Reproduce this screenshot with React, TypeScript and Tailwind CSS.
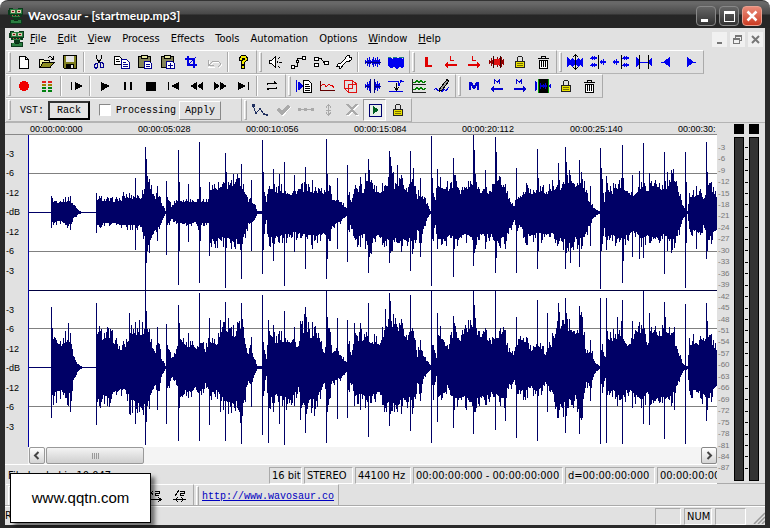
import type { ReactNode } from 'react';

type Point = [number, number, number];

// [x, peak above centre, peak below centre]
const leftBody: Point[] = [
  [0, 0, 0], [21, 0, 0], [22, 12, 11], [30, 11, 9], [40, 13, 13], [44, 8, 6], [48, 3, 2], [52, 0, 0], [66, 0, 0], [67, 14, 14],
  [80, 12, 11], [92, 13, 12], [94, 16, 14], [112, 16, 14], [116, 26, 30], [117, 50, 46], [119, 33, 38], [122, 24, 28], [126, 15, 18],
  [128, 18, 18], [131, 12, 12], [134, 5, 5], [136, 1, 1], [137, 20, 16], [139, 14, 12], [142, 6, 6], [147, 12, 11], [168, 12, 11],
  [170, 18, 18], [172, 12, 12], [179, 11, 12], [180, 26, 32], [195, 25, 28], [205, 32, 32], [211, 30, 30], [215, 24, 24], [219, 12, 12],
  [222, 12, 12], [225, 8, 8], [228, 1, 1], [232, 1, 1], [233, 36, 30], [237, 11, 8], [239, 24, 28], [246, 23, 27], [255, 22, 25],
  [262, 20, 22], [273, 24, 25], [285, 23, 26], [298, 21, 22], [300, 26, 28], [303, 14, 14], [310, 12, 10], [315, 6, 5], [317, 3, 3],
  [319, 18, 18], [322, 12, 13], [325, 25, 30], [335, 21, 24], [338, 30, 30], [342, 38, 36], [345, 22, 24], [351, 22, 27], [358, 28, 30],
  [363, 42, 38], [365, 22, 26], [372, 30, 33], [378, 23, 26], [384, 36, 36], [388, 16, 18], [391, 20, 28], [395, 13, 15], [398, 8, 5],
  [401, 1, 1], [403, 28, 28], [406, 12, 12], [408, 30, 30], [413, 28, 32], [420, 24, 25], [426, 32, 30], [431, 22, 24], [440, 27, 26],
  [446, 32, 32], [450, 23, 24], [461, 21, 24], [469, 38, 32], [473, 24, 25], [477, 22, 24], [480, 13, 18], [485, 5, 8], [487, 16, 16],
  [491, 15, 14], [497, 24, 26], [502, 20, 24], [509, 24, 24], [518, 20, 24], [523, 26, 24], [532, 26, 28], [540, 36, 36], [546, 26, 28],
  [551, 34, 30], [555, 26, 28], [559, 13, 16], [563, 6, 6], [568, 2, 2], [570, 1, 1], [572, 36, 30], [575, 12, 14], [577, 26, 28],
  [583, 22, 26], [590, 30, 30], [597, 24, 26], [606, 16, 20], [612, 30, 30], [618, 24, 26], [625, 32, 30], [635, 23, 24], [642, 36, 32],
  [646, 34, 28], [650, 18, 18], [653, 8, 8], [656, 3, 3], [658, 1, 1], [660, 16, 16], [664, 18, 20], [670, 20, 22], [674, 13, 14],
  [679, 32, 30], [683, 24, 24], [689, 15, 16],
];

const leftPeaks: Point[] = [
  [22, 16, 15], [41, 16, 17], [67, 19, 20], [106, 34, 37], [116, 65, 77], [117, 53, 48], [128, 26, 28], [137, 31, 42], [149, 62, 72],
  [150, 30, 38], [159, 28, 29], [170, 70, 70], [171, 25, 28], [180, 30, 43], [196, 59, 75], [197, 40, 35], [212, 48, 66], [222, 32, 38],
  [233, 72, 61], [234, 40, 37], [244, 43, 48], [250, 38, 30], [255, 50, 73], [265, 37, 39], [276, 45, 56], [283, 32, 36], [297, 73, 66],
  [298, 38, 46], [308, 34, 36], [318, 47, 49], [331, 35, 34], [336, 39, 36], [339, 53, 60], [340, 42, 44], [360, 61, 50], [361, 55, 40],
  [362, 46, 36], [368, 47, 30], [372, 37, 39], [381, 61, 58], [384, 44, 36], [391, 34, 44], [402, 76, 73], [408, 43, 36], [424, 54, 64],
  [425, 34, 36], [444, 77, 53], [445, 62, 40], [456, 42, 36], [466, 75, 60], [467, 60, 45], [476, 28, 36], [487, 44, 60], [497, 29, 32],
  [508, 63, 56], [509, 34, 38], [529, 49, 31], [536, 65, 56], [537, 50, 40], [541, 37, 50], [550, 52, 54], [561, 26, 33], [571, 64, 76],
  [572, 40, 38], [577, 36, 37], [593, 67, 70], [594, 34, 48], [603, 37, 44], [610, 41, 46], [614, 69, 45], [620, 39, 30], [635, 60, 61],
  [638, 40, 38], [642, 42, 34], [656, 60, 75], [657, 30, 30], [667, 26, 36], [677, 70, 46], [678, 40, 38],
];

const rightBody: Point[] = [
  [0, 0, 0], [21, 0, 0], [22, 36, 34], [26, 30, 28], [32, 25, 26], [39, 32, 30], [42, 26, 28], [44, 12, 14], [47, 5, 6], [51, 1, 1],
  [54, 0, 0], [66, 0, 0], [67, 40, 40], [72, 32, 32], [79, 34, 34], [85, 27, 28], [91, 18, 22], [98, 26, 27], [101, 40, 38], [108, 36, 38],
  [115, 40, 40], [118, 44, 42], [122, 25, 28], [126, 16, 18], [129, 26, 26], [132, 9, 9], [136, 1, 1], [138, 26, 24], [142, 10, 10],
  [145, 12, 12], [148, 22, 20], [151, 32, 32], [158, 22, 22], [163, 26, 26], [168, 20, 20], [172, 28, 28], [176, 18, 18], [181, 30, 30],
  [187, 24, 24], [192, 36, 34], [199, 42, 40], [206, 32, 38], [211, 44, 44], [215, 34, 36], [218, 14, 14], [222, 20, 20], [225, 8, 8],
  [228, 1, 1], [232, 1, 1], [234, 26, 26], [237, 9, 9], [239, 34, 34], [246, 28, 30], [256, 30, 34], [264, 28, 32], [269, 20, 22],
  [272, 36, 40], [276, 44, 44], [281, 34, 36], [286, 38, 38], [292, 24, 24], [295, 14, 16], [299, 44, 36], [303, 16, 14], [307, 20, 14],
  [313, 9, 9], [317, 4, 4], [319, 24, 24], [322, 14, 14], [325, 32, 30], [337, 30, 32], [343, 28, 30], [350, 25, 27], [357, 42, 40],
  [363, 44, 42], [368, 36, 38], [374, 38, 36], [378, 30, 32], [384, 42, 40], [388, 12, 16], [391, 24, 24], [395, 9, 9], [401, 2, 2],
  [404, 26, 26], [407, 8, 8], [409, 36, 34], [414, 32, 30], [418, 18, 20], [424, 38, 36], [430, 30, 30], [436, 38, 34], [444, 44, 42],
  [449, 36, 34], [456, 34, 32], [462, 26, 28], [468, 34, 30], [475, 34, 32], [479, 18, 20], [485, 14, 14], [489, 30, 26], [496, 28, 26],
  [502, 18, 20], [508, 26, 28], [516, 14, 16], [522, 24, 26], [528, 44, 40], [536, 46, 40], [541, 40, 36], [546, 34, 32], [553, 46, 44],
  [557, 12, 16], [561, 20, 20], [565, 6, 6], [570, 1, 1], [573, 20, 20], [576, 9, 9], [578, 32, 28], [586, 30, 26], [592, 38, 36],
  [598, 24, 24], [605, 32, 30], [613, 44, 36], [618, 26, 28], [624, 42, 40], [630, 34, 32], [634, 40, 34], [640, 40, 34], [645, 26, 26],
  [650, 12, 12], [654, 3, 3], [658, 1, 1], [660, 24, 24], [666, 28, 26], [672, 24, 28], [678, 38, 36], [683, 26, 26], [689, 17, 17],
];

const rightPeaks: Point[] = [
  [22, 60, 50], [39, 44, 38], [41, 34, 44], [67, 64, 57], [78, 40, 38], [100, 54, 46], [106, 45, 56], [110, 47, 44], [116, 77, 77],
  [117, 56, 54], [128, 40, 42], [137, 43, 56], [149, 62, 73], [150, 44, 40], [159, 34, 30], [170, 74, 73], [180, 49, 57], [191, 47, 44],
  [196, 65, 73], [199, 49, 46], [212, 64, 76], [213, 48, 48], [222, 30, 39], [233, 72, 67], [239, 47, 75], [244, 42, 44], [250, 36, 56],
  [255, 56, 77], [265, 40, 38], [271, 46, 52], [276, 60, 65], [277, 50, 46], [285, 40, 48], [297, 77, 75], [298, 50, 44], [308, 49, 51],
  [318, 47, 50], [325, 44, 38], [331, 44, 42], [339, 64, 69], [356, 58, 40], [360, 74, 58], [361, 66, 46], [368, 40, 44], [372, 48, 46],
  [381, 72, 63], [391, 27, 33], [402, 77, 75], [408, 54, 54], [424, 51, 60], [436, 42, 40], [444, 77, 66], [445, 62, 44], [456, 38, 36],
  [466, 77, 62], [476, 37, 53], [487, 50, 70], [508, 67, 73], [518, 54, 44], [529, 64, 50], [536, 69, 65], [537, 54, 48], [550, 61, 66],
  [551, 52, 50], [561, 27, 33], [571, 69, 76], [577, 69, 75], [588, 50, 38], [593, 67, 76], [603, 46, 40], [614, 77, 56], [620, 54, 57],
  [635, 65, 71], [645, 40, 42], [656, 63, 76], [677, 64, 53], [678, 46, 42],
];

const jitter = (n: number) => {
  const s = Math.sin(n * 127.1 + 311.7) * 43758.5453;
  return s - Math.floor(s);
};

function wavePath(body: Point[], peaks: Point[], centre: number) {
  const peakAt = new Map(peaks.map((p) => [p[0], p]));
  let d = '';
  let i = 0;
  for (let x = 0; x < 689; x++) {
    while (i < body.length - 2 && body[i + 1][0] <= x) i++;
    const [x0, u0, d0] = body[i];
    const [x1, u1, d1] = body[i + 1];
    const t = (x - x0) / (x1 - x0);
    let up = (u0 + (u1 - u0) * t) * (0.84 + jitter(x) ** 2 * 0.42);
    let down = (d0 + (d1 - d0) * t) * (0.84 + jitter(x + 900) ** 2 * 0.42);
    const peak = peakAt.get(x);
    if (peak) {
      up = Math.max(up, peak[1]);
      down = Math.max(down, peak[2]);
    }
    d += `M${x + 0.5} ${centre - Math.round(up)}V${centre + 1 + Math.round(down)}`;
  }
  return d;
}

const leftPath = wavePath(leftBody, leftPeaks, 77);
const rightPath = wavePath(rightBody, rightPeaks, 232);

const menus = ['File', 'Edit', 'View', 'Process', 'Effects', 'Tools', 'Automation', 'Options', 'Window', 'Help'];
const underlined = ['File', 'Edit', 'View', 'Window', 'Help'];
const times = ['00:00:00:000', '00:00:05:028', '00:00:10:056', '00:00:15:084', '00:00:20:112', '00:00:25:140', '00:00:30:'];
const dbScale = ['-3', '-6', '-12', '-dB', '-12', '-6', '-3'];
const meterScale = Array.from({ length: 29 }, (_, i) => -3 * (i + 1));

const WAVE = 'M.5 6v4M1.5 7v2M2.5 4v8M3.5 6v4M4.5 3v10M5.5 6v4M6.5 7v2M7.5 5v6M8.5 3v10M9.5 6v4M10.5 4v8M11.5 6v4M12.5 3v10M13.5 6v4M14.5 5v6';

const lock = (
  <>
    <path d="M5.5 7V3.5l1-1h3l1 1V7" fill="none" stroke="#222" />
    <path d="M3.5 7.5h9v6h-9z" fill="#e8e000" stroke="#222" />
    <path d="M5 9.5h6M5 11.500h6" stroke="#777000" />
  </>
);
const trash = (
  <>
    <path d="M3 4.5h11M6.5 4V2.5h4V4" fill="none" stroke="#000" />
    <path d="M4.5 6.5h8v7.5h-8z" fill="#fff" stroke="#000" />
    <path d="M6.5 7v6M8.5 7v6M10.5 7v6" stroke="#000" />
  </>
);
const arrowLeft = <path d="M1 11l4-3v2h9v2H5v2z" />;
const arrowRight = <path d="M15 11l-4-3v2H2v2h9v2z" />;

const icons: Record<string, ReactNode> = {
  New: <path d="M3.5 2.5h6l3 3v9h-9zM9.5 2.5v3h3" fill="#fff" stroke="#000" />,
  Open: (
    <>
      <path d="M.5 13.5v-8h4l1 1h5v3M9 3.5l2-1 3 2M14.5 2v3h-3" fill="none" stroke="#000" />
      <path d="M1 13V6h3l1 1h5v2H4z" fill="#f0f0a0" />
      <path d="M1 13.5l3-5h11l-4 5z" fill="#8c8c20" stroke="#000" />
    </>
  ),
  Save: (
    <>
      <path d="M1.5 1.5h13v13h-12l-1-1z" fill="#808020" stroke="#000" />
      <path d="M4 2h8v6H4z" fill="#e4e4e4" />
      <path d="M4 10h8v4H4z" fill="#000" />
      <path d="M9 11h2v3H9z" fill="#e4e4e4" />
    </>
  ),
  Cut: (
    <>
      <path d="M5.5 1v3l3 5M10.5 1v3l-3 5" fill="none" stroke="#000" />
      <path d="M7 9.5H5L3.5 11v2L5 14.5 6.5 13zM9 8.5h2l1.5 1.5v3h-3z" fill="none" stroke="#000090" />
    </>
  ),
  Copy: (
    <>
      <path d="M.5 2.5h5l2 2v6h-7z" fill="#fff" stroke="#000" />
      <path d="M2 5.5h3M2 7.5h4" stroke="#000" />
      <path d="M7.5 5.5h5l3 3v6h-8z" fill="#fff" stroke="#000090" />
      <path d="M9 8.5h3M9 10.5h5M9 12.5h5" stroke="#000090" />
    </>
  ),
  Paste: (
    <>
      <path d="M1.5 2.5h12v11h-12z" fill="#85855a" stroke="#000" />
      <path d="M4.5 1.5h6v3h-6z" fill="#e6e6a0" stroke="#000" />
      <path d="M7.5 7.5h5l2 2v5h-7z" fill="#fff" stroke="#000090" />
      <path d="M9 10.5h4M9 12.5h4" stroke="#000090" />
    </>
  ),
  'Paste mix': (
    <>
      <path d="M1.5 2.5h12v11h-12z" fill="#85855a" stroke="#000" />
      <path d="M4.5 1.5h6v3h-6z" fill="#e6e6a0" stroke="#000" />
      <path d="M6.5 7.5h6l2 2v5h-8z" fill="#fff" stroke="#000090" />
      <path d="M8 11.5h5M10.5 9v5" stroke="#000090" />
    </>
  ),
  Crop: (
    <>
      <path d="M5 2v9h9M2 5h9v9" fill="none" stroke="#0000e0" strokeWidth="2" />
      <path d="M5 11l8-8" stroke="#0000e0" />
    </>
  ),
  Undo: (
    <>
      <path d="M3 6l-1 6h6M3 11l4-4h5l2 2v2l-2 2" fill="none" stroke="#fff" transform="translate(1 1)" />
      <path d="M2.5 6v5.5H8M3 11l4-4h5l2 2v2l-2 2" fill="none" stroke="#aaa" />
    </>
  ),
  Help: (
    <>
      <path d="M4.5 6V4l2-2.5h4l2 2.500v2l-3 2.500V10h-3V7.500L9.500 5V4h-2v2z" fill="#f0e800" stroke="#000" />
      <path d="M6.5 11.5h3v3h-3z" fill="#f0e800" stroke="#000" />
    </>
  ),
  Mute: (
    <>
      <path d="M2.5 6.5h2l4-4v11l-4-4h-2z" fill="#fff" stroke="#000" />
      <path d="M10.5 7v2M12 8.5h3M11 4.5l2-1M11 12.5l2 1" stroke="#000" />
    </>
  ),
  Envelope: (
    <>
      <path d="M3 12.5h4.5v-8H13" fill="none" stroke="#000" />
      <path d="M1.5 11.5h3v3h-3zM12.5 2.5h3v3h-3zM6.500 6.500h2v2h-2z" fill="#fff" stroke="#000" />
    </>
  ),
  Curve: (
    <>
      <path d="M4 4.500h4l3 4M5 11.500h1" fill="none" stroke="#000" />
      <path d="M1.5 3.5h4v3h-4zM1.5 9.5h4v3h-4zM11.5 7.5h4v3h-4z" fill="#fff" stroke="#000" />
    </>
  ),
  Settings: (
    <>
      <path d="M4.5 11.5l7-7" stroke="#000" strokeWidth="4" />
      <path d="M9.5 3.5l2-2h2v2h2v2l-2 1.500h-3zM1.500 10.500l2-1.500h3v3l-2 2.500h-1.500v-2H1z" fill="#fff" stroke="#000" />
      <path d="M5 11l6-6" stroke="#fff" strokeWidth="2" />
    </>
  ),
  Normalize: (
    <>
      <path d={WAVE} stroke="#0000e0" />
      <path d="M0 8h16" stroke="#000080" />
    </>
  ),
  Amplify: (
    <>
      <path d="M0 4l2-1 2 2 2-2 3 1 3-1 2 2 2-2v9l-2 2-3-1-2 2-3-2-3 1-3-2z" fill="#0000f0" />
      <path d="M0 3.5h3M5 3.5h4M11 3.5h5" stroke="#208080" />
    </>
  ),
  'Loop point': <path d="M5 3h3v8h4v2H5z" fill="#e00000" />,
  'Previous loop': <g fill="#e00000">{arrowLeft}<path d="M7 2h1v4h3v1H7z" /></g>,
  'Next loop': <g fill="#e00000">{arrowRight}<path d="M6 2h1v4h3v1H6z" /></g>,
  'Loop region': (
    <>
      <path d={WAVE} stroke="#900000" />
      <path d="M5 5h6v6H5z" fill="#e01010" />
      <path d="M4.5 2v12M11.5 2v12" stroke="#300" />
    </>
  ),
  Lock: lock,
  Delete: trash,
  'Zoom selection': (
    <>
      <path d="M0 3l3 3 2-2 2 2h2l2-2 2 2 3-3v10l-3-2-2 2-2-2H7l-2 2-2-2-3 2z" fill="#0000f0" />
      <path d="M8.5 0v16M6 3l2.500-2L11 3M6 13l2.500 2 2.500-2" fill="none" stroke="#000" />
    </>
  ),
  'Merge left': (
    <>
      <path d="M0 4h1V3h1V2h1v1h1V2h1v1h2v2H5v1H4V5H3v1H2V5H0zM0 11h1v-1h1V9h1v1h1V9h1v1h2v2H5v1H4v-1H3v1H2v-1H0zM10 7h1V6h1v1h1V5h1v2h2v2h-2v2h-1V9h-1v1h-1V9h-1z" fill="#0000f0" />
      <path d="M8.5 1v14" stroke="#000" />
    </>
  ),
  'Merge right': (
    <>
      <path d="M9 4h1V3h1V2h1v1h1V2h1v1h2v2h-2v1h-1V5h-1v1h-1V5H9zM9 11h1v-1h1V9h1v1h1V9h1v1h2v2h-2v1h-1v-1h-1v1h-1v-1H9zM0 7h1V6h1v1h1V5h1v2h2v2H4v2H3V9H2v1H1V9H0z" fill="#0000f0" />
      <path d="M8.5 1v14" stroke="#000" />
    </>
  ),
  'Zoom width': (
    <>
      <path d="M0 3l3 3v4l-3 3zM16 3l-3 3v4l3 3z" fill="#0000f0" />
      <path d="M3 8h10" stroke="#0000f0" />
      <path d="M3.5 1v14M12.5 1v14" stroke="#000" />
    </>
  ),
  Left: <path d="M2 8h3V7h1V6h1V5h2V4h1V3h1v10h-1v-1H9v-1H7v-1H6V9H2z" fill="#0000f0" />,
  Right: <path d="M14 8h-3V7h-1V6H9V5H7V4H6V3H5v10h1v-1h1v-1h2v-1h1V9h4z" fill="#0000f0" />,
  Record: <path d="M6 3h4v1h2v2h1v4h-1v2h-2v1H6v-1H4v-2H3V6h1V4h2z" fill="#f00000" />,
  Levels: (
    <>
      <path d="M3 4h4M9 4h4" stroke="#e02020" strokeWidth="2" />
      <path d="M3 7h4M9 7h4" stroke="#a08000" strokeWidth="2" />
      <path d="M3 10h4M9 10h4M3 13h4M9 13h4" stroke="#008010" strokeWidth="2" />
    </>
  ),
  'Play from start': <path d="M3 4h1v8H3zM7 4l8 4-8 4z" />,
  Play: <path d="M4 4l9 4-9 5z" />,
  Pause: <path d="M4 4h2v8H4zM10 4h2v8h-2z" />,
  Stop: <path d="M3 4h10v9H3z" />,
  'Go to start': <path d="M2 4h1v8H2zM13 4v8L5 8z" />,
  Rewind: <path d="M8 4v8L1 8zM14 4v8L8 8z" />,
  Forward: <path d="M2 4v8l6-4zM8 4v8l7-4z" />,
  'Go to end': <path d="M3 4v8l8-4zM13 4h1v8h-1z" />,
  Loop: <path d="M3.500 7V5.500h9M10 3.500l2.500 2M3 10.500h9.500V9M5.500 12.500l-2.500-2" fill="none" stroke="#000" />,
  'Batch process': (
    <>
      <path d="M0 2h1v12H0zM2 4h1v8H2zM3 3l4 5-4 5z" fill="#0000e0" />
      <path d="M7.5 2.5h5l3 3v9h-8z" fill="#fff" stroke="#000" />
      <path d="M9 6.5h4M9 8.5h5M9 10.5h5M9 12.5h5" stroke="#000" />
    </>
  ),
  Spectrum: (
    <>
      <path d="M1.5 3v10M1 12.5h15" stroke="#600000" />
      <path d="M2 8l2-2 2 1 1 2 2-2 1-1 2 2 1-1 2 3" fill="none" stroke="#e00000" />
    </>
  ),
  Sonogram: <path d="M2.5 2.5h8v8h-8zM2.5 10.5l4 4h8V6l-4-3.500M6.5 14.5v-8h8" fill="none" stroke="#e01010" />,
  Statistics: (
    <>
      <path d={WAVE} stroke="#0000e0" />
      <path d="M0 8h16" stroke="#000080" />
      <path d="M6 1h3v14H6z" fill="#e1e1e1" />
      <path d="M5.5 1v14M9.5 1v14" stroke="#000080" />
    </>
  ),
  Interpolate: (
    <>
      <path d="M0 3.5h10l1 4 2-5 1 1h2M1 13.5h14" fill="none" stroke="#0000e0" />
      <path d="M8.5 5v7M6 9l2.500 3L11 9" fill="none" stroke="#000" />
    </>
  ),
  Oscilloscope: (
    <>
      <path d="M1.5 1v14M1 6.5h14M1 14.5h14" stroke="#222" />
      <path d="M2 4l2 1 2-3 2 3 2-3 2 3 3-2M2 11l2 1 2-3 2 3 2-3 2 3 3-2" fill="none" stroke="#008000" />
    </>
  ),
  Draw: (
    <>
      <path d="M0 12l2-2 2 3 2-2 2 3 2-3 2 2 3-4" fill="none" stroke="#0000e0" />
      <path d="M5.5 11L13 1.500l2 1.500-7 9-2.500 1z" fill="#999" stroke="#000" />
    </>
  ),
  Marker: <path d="M3 12V4h3l2 4 2-4h3v8h-2V7l-2 4H7L5 7v5z" fill="#0000d0" />,
  'Previous marker': <g fill="#0000d0">{arrowLeft}<path d="M5 6V1h1l2 3 2-3h1v5h-1V3L8 5 6 3v3z" /></g>,
  'Next marker': <g fill="#0000d0">{arrowRight}<path d="M4 6V1h1l2 3 2-3h1v5H9V3L7 5 5 3v3z" /></g>,
  'Marker region': (
    <>
      <path d="M0 3l2 2v6l-2 2zM16 5l-2 2v2l2 2z" fill="#0000e0" />
      <path d="M4 1h9v14H4z" fill="#000" />
      <path d="M3.5 1v14M13.5 1v14" stroke="#00a000" />
      <path d="M5.5 5v6M6.5 7v2M7.5 7v2M8.5 6v4M9.5 7v2M10.5 5v6M11.5 7v2" stroke="#0000d0" />
    </>
  ),
  Points: (
    <>
      <path d="M1 4l3 7 4-4 4 5 3 1" fill="none" stroke="#203060" />
      <path d="M0 2h3v3H0zM3 10h2v2H3zM7 6h2v2H7zM11 11h2v2h-2zM14 12h2v2h-2z" fill="#203060" />
    </>
  ),
  Accept: (
    <>
      <path d="M4 9l4 4 7-8" fill="none" stroke="#fff" strokeWidth="2" />
      <path d="M3 7l4 4 7-7" fill="none" stroke="#aaa" strokeWidth="3" />
    </>
  ),
  Flatten: <path d="M0 6h3v3H0zM6 6h3v3H6zM13 6h3v3h-3zM3 7h10v1H3z" fill="#aaa" />,
  Scale: <path d="M7.5 3v10M5 5.500l2.500-3 2.500 3M5 10.500l2.500 3 2.500-3M5 8h5" fill="none" stroke="#aaa" />,
  Cancel: (
    <>
      <path d="M4 3l10 11M14 3L4 14" stroke="#fff" strokeWidth="2" />
      <path d="M3 2l10 11M13 2L3 13" stroke="#aaa" strokeWidth="2" />
    </>
  ),
  Run: (
    <>
      <path d="M2 2h12v12H2z" fill="#e8f0e8" stroke="#000070" />
      <path d="M6 4l6 4-6 4z" fill="#006020" />
    </>
  ),
  Double: <path d="M1 3l3 4M4 3L1 7M6 3h4v2H6v2h4M0 11.500h12M9 9l3 2.500L9 14" fill="none" stroke="#000" />,
  Halve: <path d="M3 8l4-6M8 3h4v2H8v2h4M1 11.500h13M6 9l-2 2.500L6 14M9 9l2 2.500L9 14" fill="none" stroke="#000" />,
};

function Mascot() {
  return (
    <svg viewBox="0 0 16 16" className="size-4 shrink-0" shapeRendering="crispEdges" aria-hidden="true">
      <path d="M1 0h4v1h5V0h5v7h-1v2h-3v2h3v5H2v-4h3V9H2V7H0V2h1z" fill="#0b3a1b" />
      <path d="M2 1h12v5H2zM4 8h8v1H4zM3 12h10v3H3z" fill="#2a7d40" />
      <path d="M3 2h4v3H3zM9 2h4v3H9z" fill="#d8c8b0" />
      <path d="M4 3h2v1H4zM10 3h2v1h-2z" fill="#801010" />
      <path d="M4 7h1v1H4zM7 7h1v1H7zM10 7h1v1h-1z" fill="#c05040" />
      <path d="M6 12h4v1H6z" fill="#0a2a14" />
    </svg>
  );
}

function ToolButton({ name, active }: { name: string; active?: boolean }) {
  return (
    <button
      type="button"
      aria-label={name}
      className={`flex h-[22px] w-[23px] shrink-0 items-center justify-center ${active ? 'border border-[#999] border-r-white border-b-white bg-[#eee]' : ''}`}
    >
      <svg viewBox="0 0 16 16" className="size-4 shrink-0" shapeRendering="crispEdges">
        {icons[name]}
      </svg>
    </button>
  );
}

function Sep() {
  return <div className="mx-0.5 h-5 w-0.5 shrink-0 border-l border-[#aaa] bg-white" />;
}

function Group({ children }: { children: ReactNode }) {
  return (
    <div className="flex h-6 shrink-0 items-center border-t border-r border-b border-t-white border-r-[#aaa] border-b-[#b4b4b4] pr-0.5 pl-0.5">
      <div className="mr-px h-5 w-[3px] shrink-0 border border-white border-r-[#aaa] border-b-[#aaa] bg-[#ddd]" />
      {children}
    </div>
  );
}

// A "|" in the list is a separator between runs of buttons
function Tools({ names }: { names: string[] }) {
  return (
    <Group>
      {names.map((name, i) => (name === '|' ? <Sep key={i} /> : <ToolButton key={i} name={name} active={name === 'Run'} />))}
    </Group>
  );
}

function Cell({ children, className = '' }: { children?: ReactNode; className?: string }) {
  return (
    <div className={`h-[17px] shrink-0 border border-t-[#aaa] border-r-white border-b-white border-l-[#aaa] px-0.5 leading-4 whitespace-nowrap ${className}`}>
      {children}
    </div>
  );
}

function TitleBar() {
  return (
    <header className="flex h-7 shrink-0 items-center rounded-t-lg border-t border-[#333] bg-linear-to-b from-[#686868] from-10% via-[#484848] via-48% to-[#262626] to-52% pt-0.5 pr-1 pl-2">
      <Mascot />
      <h1 className="ml-1 flex-1 truncate font-['Lato',sans-serif] text-[12px] font-bold text-white">Wavosaur - [startmeup.mp3]</h1>
      <div className="flex gap-[3px] pr-1">
        <button type="button" aria-label="Minimize" className="size-5 rounded-sm border border-[#888] bg-linear-to-b from-[#666] to-[#333]">
          <svg viewBox="0 0 18 18" shapeRendering="crispEdges"><path d="M4 12h7v3H4z" fill="#fff" /></svg>
        </button>
        <button type="button" aria-label="Maximize" className="size-5 rounded-sm border border-[#888] bg-linear-to-b from-[#666] to-[#333]">
          <svg viewBox="0 0 18 18" shapeRendering="crispEdges"><path d="M4 4h11v11H4zM5 7v7h9V7z" fill="#fff" fillRule="evenodd" /></svg>
        </button>
        <button type="button" aria-label="Close" className="size-5 rounded-sm border border-[#e8a090] bg-linear-to-b from-[#e88a78] to-[#cc3a20]">
          <svg viewBox="0 0 18 18"><path d="M4.500 4.500l9 9M13.500 4.500l-9 9" stroke="#fff" strokeWidth="2.500" /></svg>
        </button>
      </div>
    </header>
  );
}

function MenuBar() {
  return (
    <nav className="flex h-[22px] shrink-0 items-center pr-0.5 pl-1">
      <Mascot />
      <div className="ml-[5px] flex flex-1 gap-[11px]">
        {menus.map((menu) => (
          <button key={menu} type="button">
            {underlined.includes(menu) ? <><span className="underline">{menu[0]}</span>{menu.slice(1)}</> : menu}
          </button>
        ))}
      </div>
      <div className="flex gap-[3px]">
        <button type="button" aria-label="Minimize document" className="size-[15px] bg-[#f1f1f1]">
          <svg viewBox="0 0 15 15"><path d="M5 11h5" stroke="#777" strokeWidth="2" /></svg>
        </button>
        <button type="button" aria-label="Restore document" className="size-[15px] bg-[#f1f1f1]">
          <svg viewBox="0 0 15 15" shapeRendering="crispEdges"><path d="M3.5 6.5h6v5h-6zM3 7h7M5.500 6V3.500h6v5H10M5 4h7" fill="none" stroke="#777" /></svg>
        </button>
        <button type="button" aria-label="Close document" className="size-[15px] bg-[#f1f1f1]">
          <svg viewBox="0 0 15 15"><path d="M4 4l7 7M11 4l-7 7" stroke="#777" strokeWidth="2" /></svg>
        </button>
      </div>
    </nav>
  );
}

function Waveform() {
  return (
    <div className="flex min-h-0 flex-1">
      <div className="flex w-[23px] shrink-0 flex-col pl-px font-['Liberation_Sans'] text-[9px]">
        {['left', 'right'].map((channel) => (
          <div key={channel} className="flex flex-1 flex-col justify-evenly">
            {dbScale.map((db, i) => (
              <span key={i} className="flex h-0 items-center">{db}</span>
            ))}
          </div>
        ))}
      </div>
      <svg viewBox="0 0 688 312" preserveAspectRatio="none" className="h-full min-w-0 flex-1 border-l border-[#0000a0] bg-white" shapeRendering="crispEdges">
        <path d="M0 38.5h689M0 116.5h689M0 193.5h689M0 271.5h689" stroke="#808080" />
        <path d={leftPath} stroke="#000066" />
        <path d={rightPath} stroke="#000066" />
        <path d="M0 155.5h689" stroke="#000040" />
      </svg>
    </div>
  );
}

function ScrollBar() {
  return (
    <div className="ml-[23px] flex h-[17px] shrink-0 gap-px bg-[#f4f4f4] pl-px">
      <button type="button" aria-label="Scroll left" className="w-4 rounded-xs border border-[#999] bg-linear-to-b from-white to-[#d4d4d4]">
        <svg viewBox="0 0 14 15"><path d="M8.500 4L5 7.500 8.500 11" fill="none" stroke="#444" strokeWidth="2" /></svg>
      </button>
      <div className="flex flex-1">
        <div className="flex w-[15%] items-center justify-center gap-px rounded-xs border border-[#999] bg-linear-to-b from-[#f4f4f4] to-[#cfcfcf]">
          {[0, 1, 2, 3].map((i) => <i key={i} className="h-1.5 w-px border-r border-[#999] bg-white" />)}
        </div>
      </div>
      <button type="button" aria-label="Scroll right" className="w-4 rounded-xs border border-[#888] bg-linear-to-b from-white to-[#d4d4d4]">
        <svg viewBox="0 0 14 15"><path d="M5.500 4L9 7.500 5.500 11" fill="none" stroke="#444" strokeWidth="2" /></svg>
      </button>
    </div>
  );
}

function Meter() {
  return (
    <div className="flex w-2.5 flex-col gap-[3px]">
      <div className="h-2.5 bg-black" />
      <div className="flex-1 border border-black bg-[#333]" />
    </div>
  );
}

function Meters() {
  return (
    <aside className="flex w-12 shrink-0 border-b border-[#aaa] pt-px pr-1.5 pb-0.5 pl-px font-['Liberation_Sans'] text-[8px] text-[#777]">
      <div className="flex flex-1 flex-col pt-[18px] pb-[7px]">
        {meterScale.map((v) => <span key={v} className="flex min-h-0 flex-1 items-center leading-none">{v}</span>)}
      </div>
      <Meter />
      <div className="flex w-[5px] flex-col items-center pt-[18px] pb-[7px]">
        {meterScale.map((v) => <span key={v} className="flex min-h-0 flex-1 items-center"><i className="h-px w-[3px] bg-black" /></span>)}
      </div>
      <Meter />
    </aside>
  );
}

export default function App() {
  return (
    <div className="relative flex h-screen w-full flex-col overflow-hidden bg-white pr-px font-['DejaVu_Sans_Condensed','DejaVu_Sans',sans-serif] text-[11px] text-black">
      <TitleBar />
      <div className="flex min-h-0 flex-1 flex-col border-r-[5px] border-b-[3px] border-l-[5px] border-[#2a2a2a] bg-[#e1e1e1]">
        <MenuBar />

        {/* Toolbars */}
        <div className="shrink-0 overflow-hidden border-b border-[#b4b4b4] pl-px">
          <div className="flex">
            <Tools names={['New', 'Open', 'Save', '|', 'Cut', 'Copy', 'Paste', 'Paste mix', 'Crop', 'Undo', '|', 'Help']} />
            <Tools names={['Mute', 'Envelope', 'Curve', 'Settings', '|', 'Normalize', 'Amplify']} />
            <Tools names={['Loop point', 'Previous loop', 'Next loop', 'Loop region', 'Lock', 'Delete']} />
            <Tools names={['Zoom selection', 'Merge left', 'Merge right', 'Zoom width', 'Left', 'Right']} />
          </div>
          <div className="flex">
            <Tools names={['Record', 'Levels', '|', 'Play from start', '|', 'Play', 'Pause', 'Stop', 'Go to start', 'Rewind', 'Forward', 'Go to end', '|', 'Loop']} />
            <Tools names={['Batch process', 'Spectrum', 'Sonogram', 'Statistics', 'Interpolate', 'Oscilloscope', 'Draw']} />
            <Tools names={['Marker', 'Previous marker', 'Next marker', 'Marker region', 'Lock', 'Delete']} />
          </div>
          <div className="flex">
            <Group>
              <div className="flex items-center pr-[18px] pl-2 font-['Liberation_Mono',monospace] text-[10px]">
                <span>VST:</span>
                <button type="button" className="ml-1 h-[19px] w-[42px] border-2 border-black border-t-[#333] border-l-[#333] bg-[#e4e4e4]">Rack</button>
                <label className="ml-[9px] flex items-center gap-[5px]">
                  <input type="checkbox" className="size-3 appearance-none border border-[#888] border-r-white border-b-white bg-white" />
                  Processing
                </label>
                <button type="button" className="ml-[3px] h-[19px] w-[42px] border border-t-white border-r-[#888] border-b-[#888] border-l-white">Apply</button>
              </div>
            </Group>
            <Tools names={['Points', 'Accept', 'Flatten', 'Scale', 'Cancel', 'Run', 'Lock']} />
          </div>
        </div>

        {/* Editor */}
        <main className="flex min-h-0 flex-1">
          <section className="flex min-w-0 flex-1 flex-col">
            <div className="flex h-3 shrink-0 border-b border-[#888] pl-[25px] font-['Liberation_Sans'] text-[9px] leading-3">
              {times.map((time) => <span key={time} className="w-[108px] shrink-0 last:w-auto">{time}</span>)}
            </div>
            <Waveform />
            <ScrollBar />
            <div className="flex h-5 shrink-0 items-end gap-0.5 overflow-hidden border-t border-white">
              <Cell className="w-[262px] border-transparent!">File loaded in 10.047 s</Cell>
              <Cell className="w-[33px]">16 bit</Cell>
              <Cell className="w-[49px]">STEREO</Cell>
              <Cell className="w-14">44100 Hz</Cell>
              <Cell className="w-[150px]">00:00:00:000 - 00:00:00:000</Cell>
              <Cell className="w-[90px]">d=00:00:00:000</Cell>
              <Cell className="w-[90px]">00:00:00:00</Cell>
            </div>
          </section>
          <Meters />
        </main>

        <div className="flex h-[22px] shrink-0 overflow-hidden border-b border-[#aaa] pl-px">
          <Tools names={['Play', 'Stop', '|', 'Record', '|', 'Left', 'Right', '|', 'Double', 'Halve']} />
          <Group>
            <a href="http://www.wavosaur.com" className="px-0.5 font-['Liberation_Mono',monospace] text-[10px] text-[#0000c0] underline">http://www.wavosaur.co</a>
          </Group>
        </div>

        <footer className="flex h-[19px] shrink-0 items-center gap-[3px] border-t border-white">
          <span className="flex-1">Ready</span>
          <Cell className="w-[26px]" />
          <Cell className="w-7">NUM</Cell>
          <Cell className="w-[31px]" />
          <svg viewBox="0 0 16 16" className="size-4"><path d="M5 16L16 5M9 16l7-7M13 16l3-3" stroke="#999" strokeWidth="1.500" /></svg>
        </footer>
      </div>

      <div className="absolute bottom-[5px] left-2.5 flex h-[50px] w-[141px] items-center justify-center border border-black bg-white font-['Liberation_Sans'] text-[15px] shadow-[4px_4px_4px_rgba(0,0,0,0.5)]">
        www.qqtn.com
      </div>
    </div>
  );
}
